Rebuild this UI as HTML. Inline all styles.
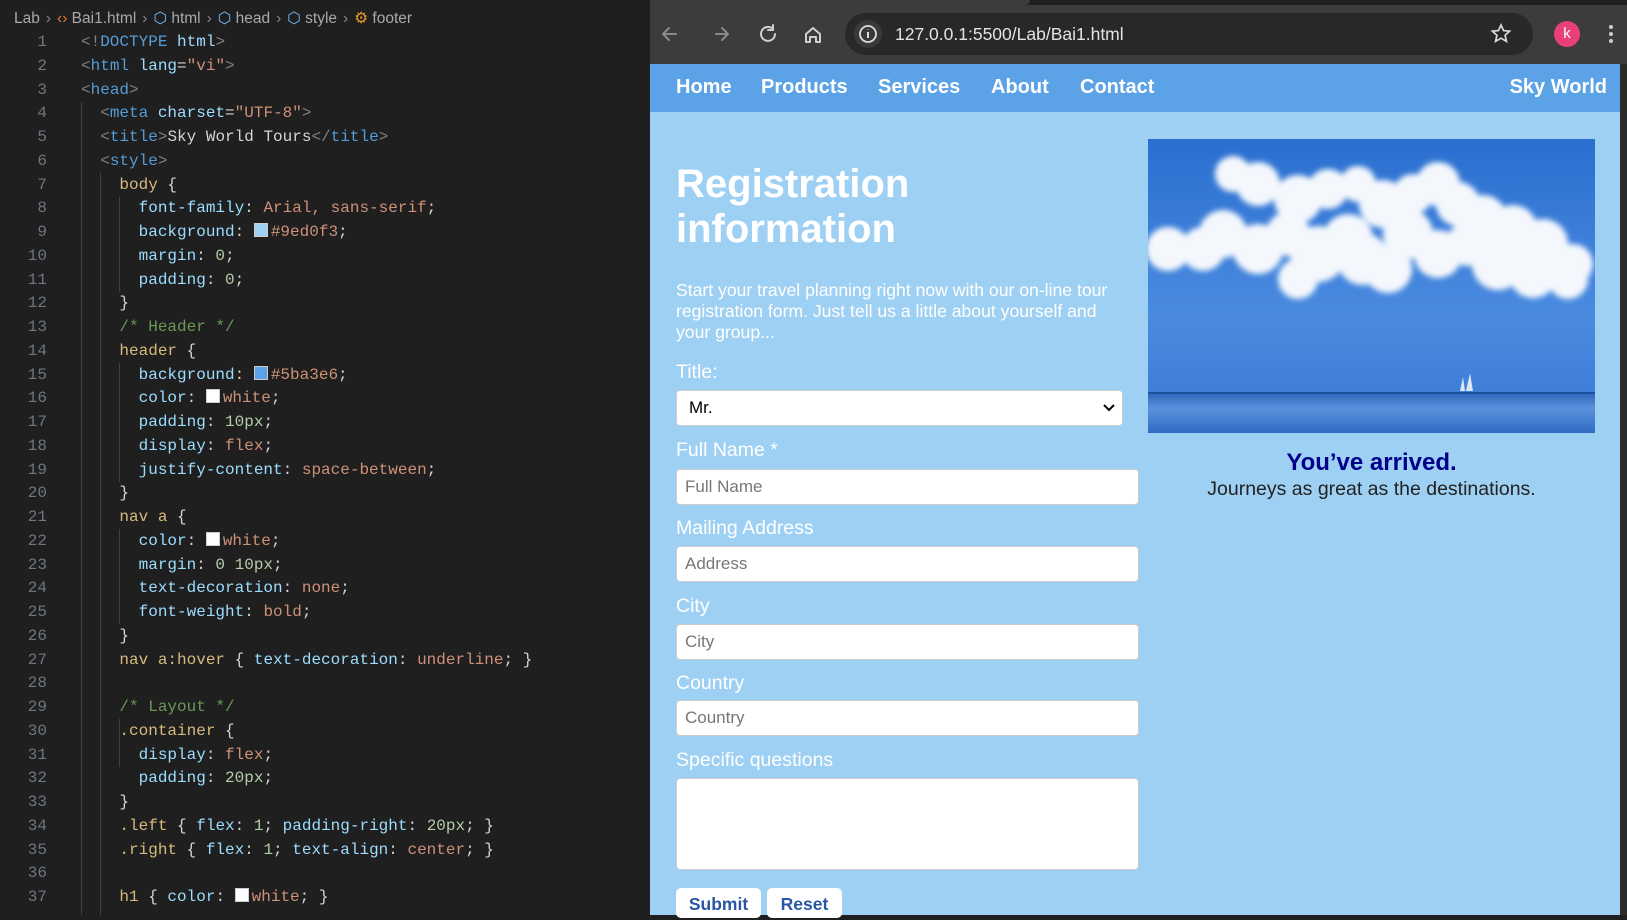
<!DOCTYPE html>
<html><head><meta charset="utf-8"><style>
*{box-sizing:border-box;margin:0;padding:0}
body{width:1627px;height:915px;overflow:hidden;background:#1f1f1f;position:relative;font-family:"Liberation Sans",sans-serif}
#ed{position:absolute;left:0;top:0;width:650px;height:915px;background:#1f1f1f}
.bc{position:absolute;top:9px;left:14px;color:#a9a9a9;font-size:15.5px;white-space:nowrap}
.bc .s{color:#888;margin:0 6px}
.code{position:absolute;top:31px;left:0;font-family:"Liberation Mono",monospace;font-size:16px;line-height:23.75px;color:#d4d4d4;white-space:pre}
.ln{position:absolute;left:0;top:0;width:47px;text-align:right;color:#6e7681}
.tx{position:absolute;left:81px;top:0}
.g{position:absolute;width:1px;background:#404040}
.p{color:#808080}.t{color:#569cd6}.a{color:#9cdcfe}.s1{color:#ce9178}.se{color:#d7ba7d}.n{color:#b5cea8}.c{color:#6a9955}
.sw{display:inline-block;width:14px;height:14px;border:1px solid #ccc;vertical-align:-1px;margin-right:3px}
#br{position:absolute;left:650px;top:0;width:977px;height:915px;background:#9ed0f3}
.tb{position:absolute;left:0;top:0;width:977px;height:64px;background:#3c3c3c}
.tabs{position:absolute;left:0;top:0;width:977px;height:5px;background:#1f1f1f}
.addr{position:absolute;left:195px;top:13px;width:688px;height:42px;border-radius:21px;background:#282828;color:#e3e3e3;font-size:17.5px;line-height:42px;padding-left:50px}
.hdr{position:absolute;left:0;top:64px;width:970px;height:48px;background:#5ba3e6;color:#fff;font-weight:bold;font-size:20px}
.hdr span{position:absolute;top:12px}
.sb{position:absolute;left:970px;top:64px;width:7px;height:851px;background:#2b2b2b}
.w{position:absolute;color:#fff}
.lab{position:absolute;left:26px;color:#fff;font-size:19.5px}
.in{position:absolute;left:26px;width:463px;height:36px;background:#fff;border:1px solid #ccc;border-radius:4px;color:#777;font-size:17px;line-height:34px;padding-left:8px}
.btn{position:absolute;top:888px;height:30px;background:#fff;border-radius:5px;color:#2a56a6;font-weight:bold;font-size:17.5px;text-align:center;line-height:32px}
</style></head><body>
<div id="ed">
<div class="bc">Lab<span class="s">›</span><span style="color:#e37933">‹›</span> Bai1.html<span class="s">›</span><span style="color:#75beff">⬡</span> html<span class="s">›</span><span style="color:#75beff">⬡</span> head<span class="s">›</span><span style="color:#75beff">⬡</span> style<span class="s">›</span><span style="color:#ee9d28">⚙</span> footer</div>
<div class="g" style="left:81px;top:102px;height:813px"></div>
<div class="g" style="left:100px;top:173px;height:742px"></div>
<div class="g" style="left:119px;top:197px;height:95px"></div>
<div class="g" style="left:119px;top:363px;height:119px"></div>
<div class="g" style="left:119px;top:529px;height:95px"></div>
<div class="g" style="left:119px;top:719px;height:48px"></div>
<div class="code"><div class="ln">1
2
3
4
5
6
7
8
9
10
11
12
13
14
15
16
17
18
19
20
21
22
23
24
25
26
27
28
29
30
31
32
33
34
35
36
37</div><div class="tx"><span class="p">&lt;!</span><span class="t">DOCTYPE</span> <span class="a">html</span><span class="p">&gt;</span>
<span class="p">&lt;</span><span class="t">html</span> <span class="a">lang</span>=<span class="s1">"vi"</span><span class="p">&gt;</span>
<span class="p">&lt;</span><span class="t">head</span><span class="p">&gt;</span>
  <span class="p">&lt;</span><span class="t">meta</span> <span class="a">charset</span>=<span class="s1">"UTF-8"</span><span class="p">&gt;</span>
  <span class="p">&lt;</span><span class="t">title</span><span class="p">&gt;</span>Sky World Tours<span class="p">&lt;/</span><span class="t">title</span><span class="p">&gt;</span>
  <span class="p">&lt;</span><span class="t">style</span><span class="p">&gt;</span>
    <span class="se">body</span> {
      <span class="a">font-family</span>: <span class="s1">Arial, sans-serif</span>;
      <span class="a">background</span>: <span class="sw" style="background:#9ed0f3"></span><span class="s1">#9ed0f3</span>;
      <span class="a">margin</span>: <span class="n">0</span>;
      <span class="a">padding</span>: <span class="n">0</span>;
    }
    <span class="c">/* Header */</span>
    <span class="se">header</span> {
      <span class="a">background</span>: <span class="sw" style="background:#5ba3e6"></span><span class="s1">#5ba3e6</span>;
      <span class="a">color</span>: <span class="sw" style="background:#fff"></span><span class="s1">white</span>;
      <span class="a">padding</span>: <span class="n">10px</span>;
      <span class="a">display</span>: <span class="s1">flex</span>;
      <span class="a">justify-content</span>: <span class="s1">space-between</span>;
    }
    <span class="se">nav a</span> {
      <span class="a">color</span>: <span class="sw" style="background:#fff"></span><span class="s1">white</span>;
      <span class="a">margin</span>: <span class="n">0 10px</span>;
      <span class="a">text-decoration</span>: <span class="s1">none</span>;
      <span class="a">font-weight</span>: <span class="s1">bold</span>;
    }
    <span class="se">nav a:hover</span> { <span class="a">text-decoration</span>: <span class="s1">underline</span>; }

    <span class="c">/* Layout */</span>
    <span class="se">.container</span> {
      <span class="a">display</span>: <span class="s1">flex</span>;
      <span class="a">padding</span>: <span class="n">20px</span>;
    }
    <span class="se">.left</span> { <span class="a">flex</span>: <span class="n">1</span>; <span class="a">padding-right</span>: <span class="n">20px</span>; }
    <span class="se">.right</span> { <span class="a">flex</span>: <span class="n">1</span>; <span class="a">text-align</span>: <span class="s1">center</span>; }

    <span class="se">h1</span> { <span class="a">color</span>: <span class="sw" style="background:#fff"></span><span class="s1">white</span>; }</div></div>
</div>
<div id="br">
<div class="tb"></div><div class="tabs"></div>
<div style="position:absolute;left:0;top:0;width:380px;height:5px;background:#3c3c3c;border-radius:0 0 8px 0"></div>
<svg style="position:absolute;left:0;top:18px" width="190" height="32" fill="none" stroke-width="2" stroke-linecap="round" stroke-linejoin="round">
<path d="M26 16h-12M19 10l-6 6 6 6" stroke="#8a8a8a"/>
<path d="M66 16h12M72 10l6 6-6 6" stroke="#8a8a8a"/>
<path d="M123 11a7 7 0 1 0 2 5M123 7v5h-5" stroke="#d0d0d0"/>
<path d="M156 24v-8l7-6 7 6v8h-4v-5h-6v5z" stroke="#d0d0d0"/>
</svg>
<div class="addr">127.0.0.1:5500/Lab/Bai1.html
<svg style="position:absolute;left:8px;top:6px" width="30" height="30"><circle cx="15" cy="15" r="14" fill="#3a3a3a"/><circle cx="15" cy="15" r="8" fill="none" stroke="#ddd" stroke-width="1.8"/><path d="M15 13v6M15 10.3v.3" stroke="#ddd" stroke-width="2"/></svg>
<svg style="position:absolute;left:645px;top:10px" width="22" height="22"><path d="M11 2l2.6 5.6 6 .6-4.5 4.1 1.3 6-5.4-3.1-5.4 3.1 1.3-6L2.4 8.2l6-.6z" fill="none" stroke="#ddd" stroke-width="1.7"/></svg></div>
<div style="position:absolute;left:904px;top:21px;width:26px;height:26px;border-radius:50%;background:#e8407a;color:#fff;font-size:15px;text-align:center;line-height:25px">k</div>
<div style="position:absolute;left:959px;top:25px;width:4px;height:4px;border-radius:50%;background:#ccc;box-shadow:0 7px 0 #ccc,0 14px 0 #ccc"></div>
<div class="hdr"><span style="left:26px">Home</span><span style="left:111px">Products</span><span style="left:228px">Services</span><span style="left:341px">About</span><span style="left:430px">Contact</span><span style="right:13px">Sky World</span></div>
<div class="sb"></div>
<div class="w" style="left:26px;top:162px;font-size:40px;font-weight:bold;line-height:45px">Registration<br>information</div>
<div class="w" style="left:26px;top:280px;font-size:17.6px;line-height:21px;width:440px">Start your travel planning right now with our on-line tour registration form. Just tell us a little about yourself and your group...</div>
<div class="lab" style="top:361px">Title:</div>
<div class="in" style="top:390px;width:447px;color:#000;padding-left:12px">Mr.<svg style="position:absolute;right:6px;top:12px" width="14" height="10"><path d="M2 2l5 5 5-5" fill="none" stroke="#000" stroke-width="2"/></svg></div>
<div class="lab" style="top:439px">Full Name *</div>
<div class="in" style="top:469px">Full Name</div>
<div class="lab" style="top:517px">Mailing Address</div>
<div class="in" style="top:546px">Address</div>
<div class="lab" style="top:595px">City</div>
<div class="in" style="top:624px">City</div>
<div class="lab" style="top:672px">Country</div>
<div class="in" style="top:700px">Country</div>
<div class="lab" style="top:749px">Specific questions</div>
<div class="in" style="top:778px;height:92px"></div>
<div class="btn" style="left:26px;width:85px">Submit</div>
<div class="btn" style="left:117px;width:75px">Reset</div>
<svg style="position:absolute;left:498px;top:139px" width="447" height="294">
<defs><linearGradient id="sk" x1="0" y1="0" x2="0" y2="1"><stop offset="0" stop-color="#2a6fd0"/><stop offset=".6" stop-color="#4a8be0"/><stop offset="1" stop-color="#3a78d4"/></linearGradient>
<linearGradient id="se" x1="0" y1="0" x2="0" y2="1"><stop offset="0" stop-color="#2b62b8"/><stop offset=".4" stop-color="#5b92dc"/><stop offset="1" stop-color="#2f6bc4"/></linearGradient>
<filter id="bl"><feGaussianBlur stdDeviation="3"/></filter></defs>
<rect width="447" height="294" fill="url(#sk)"/>
<g fill="#f4f8fd" filter="url(#bl)">
<circle cx="85" cy="35" r="18"/><circle cx="110" cy="45" r="22"/><circle cx="150" cy="60" r="24"/><circle cx="180" cy="50" r="20"/><circle cx="210" cy="45" r="18"/><circle cx="235" cy="65" r="24"/><circle cx="265" cy="55" r="20"/><circle cx="290" cy="45" r="22"/><circle cx="310" cy="65" r="22"/><circle cx="335" cy="80" r="24"/><circle cx="365" cy="90" r="24"/><circle cx="395" cy="105" r="25"/><circle cx="425" cy="125" r="20"/>
<circle cx="20" cy="110" r="22"/><circle cx="55" cy="110" r="22"/><circle cx="75" cy="95" r="24"/><circle cx="110" cy="110" r="25"/><circle cx="140" cy="95" r="22"/><circle cx="170" cy="115" r="28"/><circle cx="215" cy="120" r="26"/><circle cx="240" cy="130" r="24"/><circle cx="290" cy="115" r="24"/><circle cx="320" cy="105" r="22"/><circle cx="350" cy="125" r="26"/><circle cx="385" cy="135" r="24"/><circle cx="420" cy="140" r="20"/><circle cx="150" cy="140" r="20"/><circle cx="200" cy="100" r="25"/><circle cx="260" cy="95" r="25"/>
</g>
<rect y="253" width="447" height="41" fill="url(#se)"/>
<rect y="253" width="447" height="2" fill="#1e4f9a"/>
<path d="M312 252l3-14 2 14zM318 252l4-18 3 18z" fill="#dde8f5"/>
</svg>
<div style="position:absolute;left:498px;top:449px;width:447px;text-align:center;color:#00008b;font-weight:bold;font-size:24px">You’ve arrived.</div>
<div style="position:absolute;left:498px;top:478px;width:447px;text-align:center;color:#222;font-size:19.5px">Journeys as great as the destinations.</div>
</div>
</body></html>
